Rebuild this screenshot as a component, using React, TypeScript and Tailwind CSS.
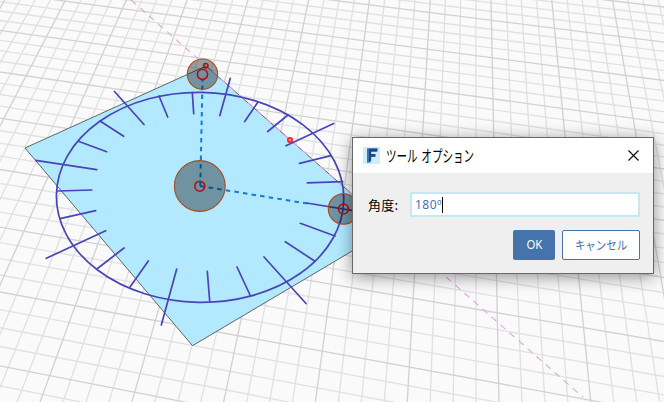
import React from "react";

type Pt = [number, number];

// Homography from major-grid units on the sketch plane to screen pixels.
const H = [57.6822, -21.0603, 491.417, 7.71868, 34.8915, 20.296, -0.00977962, -0.0443051];

function project(u: number, v: number): Pt {
  const w = H[6] * u + H[7] * v + 1;
  return [(H[0] * u + H[1] * v + H[2]) / w, (H[3] * u + H[4] * v + H[5]) / w];
}

function Grid() {
  const lines: { a: Pt; b: Pt; major: boolean }[] = [];
  for (let i = -48; i <= 20; i++) lines.push({ a: project(i / 4, -4), b: project(i / 4, 11), major: i % 4 === 0 });
  for (let i = -16; i <= 44; i++) lines.push({ a: project(-12, i / 4), b: project(5, i / 4), major: i % 4 === 0 });
  lines.sort((p, q) => Number(p.major) - Number(q.major));
  return (
    <g>
      {lines.map(({ a, b, major }, i) => (
        <line key={i} x1={a[0]} y1={a[1]} x2={b[0]} y2={b[1]} stroke={major ? "#d2d2d2" : "#e1e1e1"} strokeWidth={1.35} />
      ))}
    </g>
  );
}

const TICKS: number[][] = [
  [114.5, 91.5, 144, 124.5], [159, 96, 167.7, 117], [192.3, 92.5, 193.7, 113.7], [100, 121, 123.7, 136.3],
  [230.3, 78.3, 219.8, 115.6], [258, 102, 244.7, 121.5], [288, 115, 267.7, 131.5], [333.7, 123.5, 286, 145.7],
  [331, 155.7, 299.5, 163.3], [342.7, 181.7, 307.3, 182.8], [306.7, 203, 353, 210.7], [300.3, 223.3, 335, 236],
  [285.3, 241.7, 315, 261.3], [264, 257, 306, 303.5], [237, 267, 250.5, 296], [207.3, 271.3, 209.7, 301],
  [176.7, 269, 161.3, 325], [148.3, 261, 130, 287], [124, 248, 97.5, 268.5], [105.7, 230.7, 46.3, 258.3],
  [95.7, 210.7, 60, 218.7], [91.7, 190, 57.3, 191], [35.7, 160.3, 96.7, 169.7], [78.3, 141.3, 106.7, 151.7],
];

function Viewport() {
  return (
    <svg className="block h-[402px] w-[664px]" viewBox="0 0 664 402">
      <rect width="664" height="402" fill="#fafafa" />
      <Grid />
      <path d="M25 148 206 66 390.8 228.1 192.5 345.7Z" fill="#b2e9ff" stroke="#555" strokeWidth="0.9" />
      <line x1="131" y1="0" x2="583" y2="397.3" stroke="#e4a3e6" strokeWidth="1.1" strokeDasharray="6.6 5.4" />
      <g stroke="#147ad6" strokeWidth="2" strokeDasharray="4.5 4.2">
        <path d="M200.3 186 202.5 80" />
        <path d="M200 186 309 203.8" />
      </g>
      <g fill="none" stroke="#4845b9" strokeWidth="1.7" strokeLinecap="round">
        <ellipse cx="200.1" cy="197.3" rx="143.7" ry="105" transform="rotate(1 200 197.3)" />
        {TICKS.map(([a, b, c, d], i) => (
          <line key={i} x1={a} y1={b} x2={c} y2={d} />
        ))}
      </g>
      <g fill="#0a1214" fillOpacity="0.4" stroke="#ad4a20" strokeWidth="1.1">
        <circle cx="202.5" cy="74.2" r="15.2" />
        <circle cx="199.8" cy="186" r="25.4" />
        <circle cx="343.5" cy="209" r="15.2" />
      </g>
      <g fill="none" stroke="#b30e14" strokeWidth="1.6">
        <circle cx="202.5" cy="74.3" r="5.1" />
        <circle cx="205.8" cy="65.7" r="2.2" />
        <circle cx="199.8" cy="186.2" r="5" />
        <circle cx="343.5" cy="209" r="5" />
        <circle cx="290" cy="140" r="2.2" stroke="#fb1a1f" fill="#ef9a9a" />
      </g>
    </svg>
  );
}

function AppLogo() {
  return (
    <svg className="h-[17px] w-[17px] shrink-0" viewBox="0 0 17 17">
      <rect width="17" height="17" fill="#cdeef9" />
      <path d="M4 1.5H14.5L13.5 5H8V7H12V10H8V15.5H4Z" fill="#6ea6d2" />
      <path d="M5.5 1.5H14.5V4.5H8.2V7H12.5V9.7H8.2V13.5L5.5 15.5Z" fill="#1d4585" />
      <path d="M4 1.5H5.7V15.5H4Z" fill="#3677b8" />
    </svg>
  );
}

function Dialog() {
  return (
    <div className="absolute left-[352px] top-[137px] flex h-[137px] w-[302px] flex-col border border-[#686868] bg-[#efefef] shadow-[0_3px_16px_rgba(0,0,0,0.42)]">
      <div className="flex h-[35px] shrink-0 items-center bg-white pl-[10px] pr-[14px]">
        <AppLogo />
        <div className="-mt-0.5 ml-[6px] w-[200px] font-['Noto_Sans_CJK_JP',sans-serif] text-[16px] leading-5 text-black">
          <span className="inline-block origin-left scale-x-[0.66] whitespace-nowrap [word-spacing:2px]">ツール オプション</span>
        </div>
        <svg className="ml-auto h-[11px] w-[11px]" viewBox="0 0 11 11">
          <path d="M.5 .5 10.5 10.5M10.5 .5 .5 10.5" stroke="#111" strokeWidth="1.2" />
        </svg>
      </div>
      <div className="flex flex-col pl-[15px] pr-[13px] pt-[19px]">
        <div className="flex items-center">
          <label className="w-[42px] whitespace-nowrap font-['Noto_Sans_CJK_JP',sans-serif] text-[13px] leading-5 tracking-[0.3px] text-black">角度:</label>
          <div className="flex h-[25px] w-[230px] items-center border-2 border-[#c3e9f4] bg-white pl-[3px]">
            <span className="font-['Noto_Sans','Noto_Sans_CJK_JP',sans-serif] text-[12px] leading-4 tracking-[0.45px] text-[#4474ab]">180º</span>
            <span className="h-4 w-px bg-black" />
          </div>
        </div>
        <div className="mt-[13px] flex justify-end gap-[7px]">
          <button className="flex h-[30px] w-[42px] items-center justify-center rounded-[2px] bg-[#4474ab] font-['Noto_Sans','Noto_Sans_CJK_JP',sans-serif] text-[12px] text-white">
            <span className="inline-block scale-x-[0.95]">OK</span>
          </button>
          <button className="flex h-[30px] w-[78px] items-center justify-center rounded-[2px] border border-[#4474ab] bg-white font-['Noto_Sans_CJK_JP',sans-serif] text-[12px] text-[#4474ab]">
            <span className="inline-block scale-x-[0.87] whitespace-nowrap">キャンセル</span>
          </button>
        </div>
      </div>
    </div>
  );
}

export default function App() {
  return (
    <div className="relative h-[402px] w-[664px] overflow-hidden">
      <Viewport />
      <Dialog />
    </div>
  );
}
